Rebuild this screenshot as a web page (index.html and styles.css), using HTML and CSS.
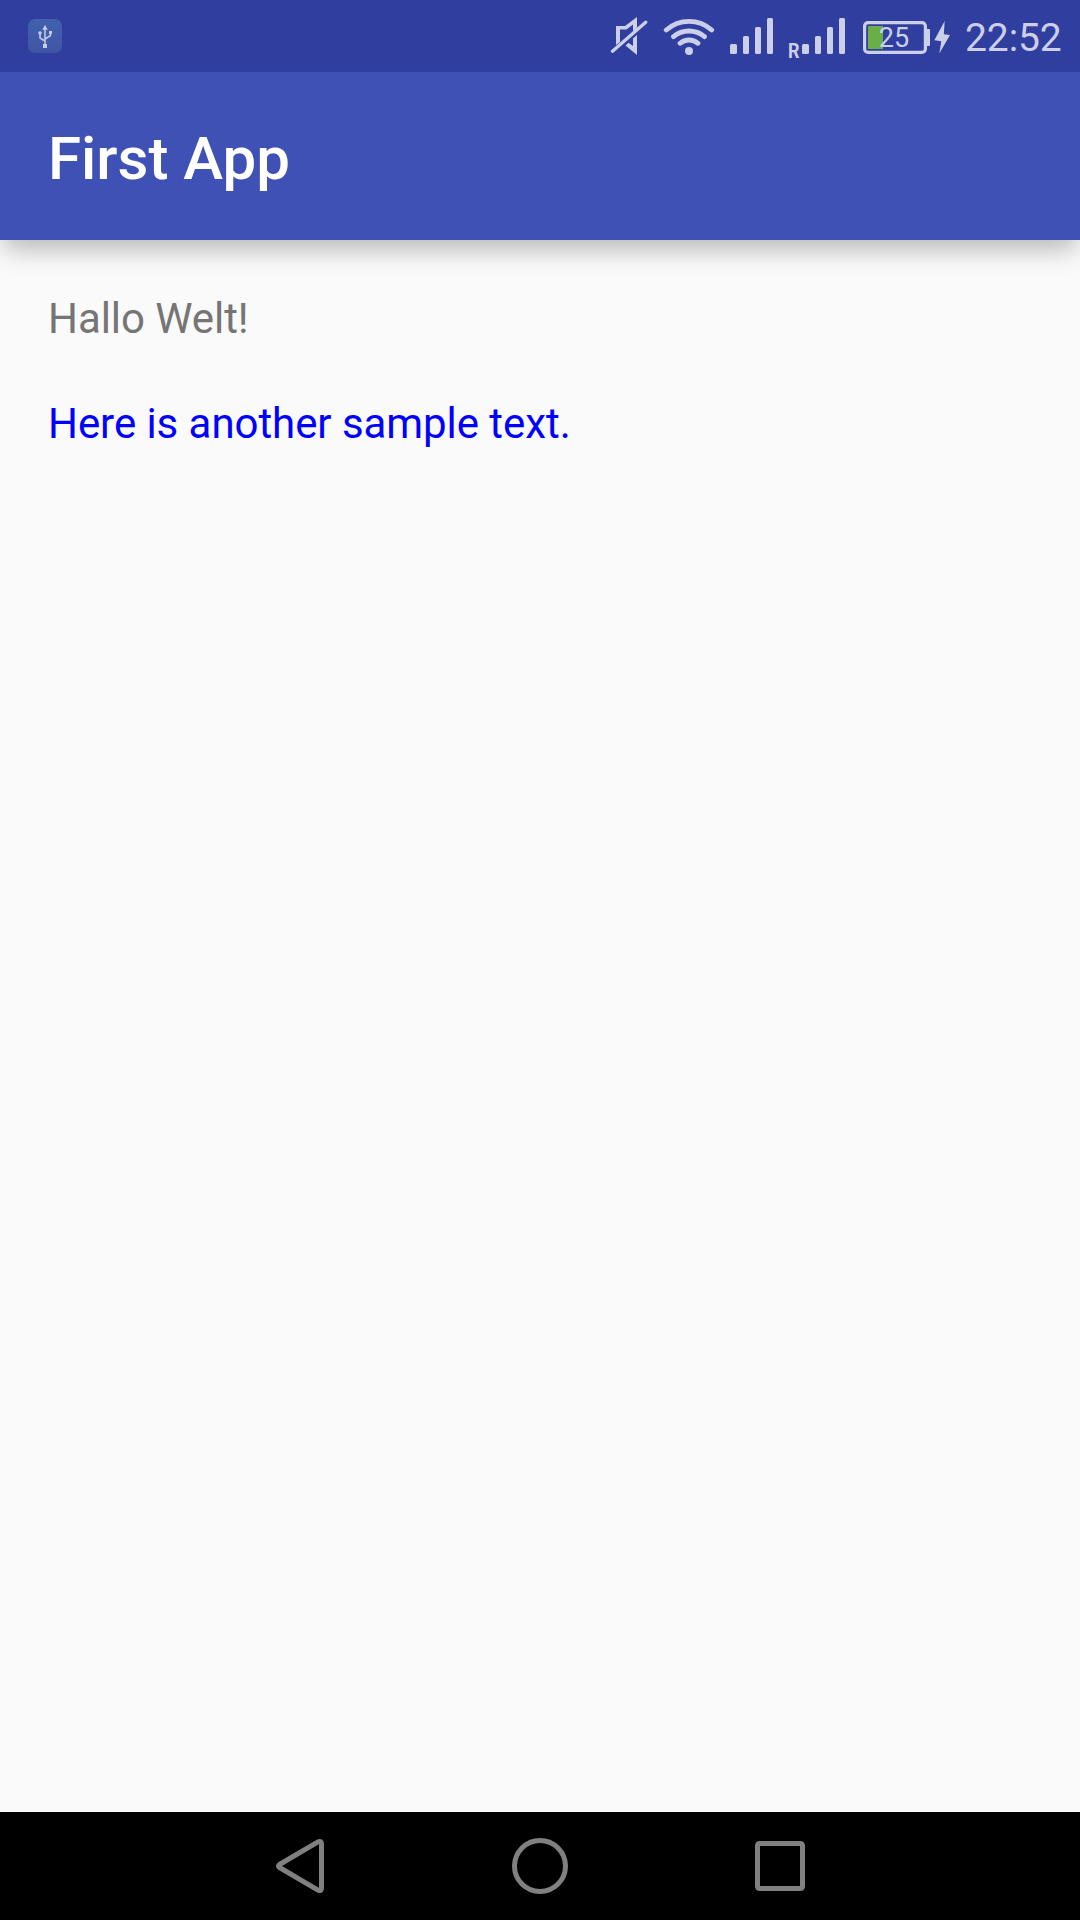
FILE: index.html
```html
<!DOCTYPE html>
<html lang="de">
<head>
<meta charset="utf-8">
<title>First App</title>
<link rel="stylesheet" href="styles.css">
</head>
<body>
<div class="screen">
  <header class="status-bar">
    <svg class="usb" width="34" height="34" viewBox="28 19 34 34">
      <defs><linearGradient id="tile" x2="0" y2="1"><stop offset="0" stop-color="#4061ae"/><stop offset="1" stop-color="#4055a5"/></linearGradient></defs>
      <rect x="28" y="19" width="34" height="34" rx="7" fill="url(#tile)"/>
      <path d="M45 46V29M45 41l-5-3v-5M45 39l5.500-3.500v-3" fill="none" stroke="#c4cbe6" stroke-width="1.500"/>
      <path d="M45 25l2.800 4.800h-5.600zM43 44h4v4h-4zM49 31h3v3h-3z" fill="#c4cbe6"/>
      <circle cx="40" cy="33" r="1.800" fill="#c4cbe6"/>
    </svg>
    <div class="indicators">
      <svg class="mute" width="38" height="72" viewBox="610 0 38 72">
        <path d="M616 45V26h9l12-9v11l-4 3.500V24.500l-6.500 5H620V42zM637 35v20l-11.500-9.500 3-2.800 4.500 3.300V38.500z" fill="#cccfe8"/>
        <path d="M612.500 51.200L645.700 22.200" stroke="#cccfe8" stroke-width="3.300" stroke-linecap="round"/>
      </svg>
      <svg class="wifi" width="52" height="72" viewBox="663 0 52 72">
        <g fill="none" stroke="#cccfe8" stroke-width="4.800" stroke-linecap="round">
          <path d="M666.300 30A34 34 0 0 1 711.700 30M673.500 36.700A24 24 0 0 1 704.500 36.700M680 43.300A14 14 0 0 1 698 43.300"/>
        </g>
        <circle cx="689" cy="51" r="4" fill="#cccfe8"/>
      </svg>
      <svg class="signal" width="43" height="72" viewBox="730 0 43 72" fill="#cccfe8">
        <rect x="730" y="44" width="7" height="10" rx="1.500"/>
        <rect x="743" y="36" width="6" height="18" rx="1.500"/>
        <rect x="755" y="27" width="6" height="27" rx="1.500"/>
        <rect x="767" y="18" width="6" height="36" rx="1.500"/>
      </svg>
      <svg class="signal-roaming" width="57" height="72" viewBox="788 0 57 72" fill="#cccfe8">
        <text class="roaming" x="788" y="58" textLength="11.500" lengthAdjust="spacingAndGlyphs">R</text>
        <rect x="802" y="44" width="7" height="10" rx="1.500"/>
        <rect x="815" y="36" width="6" height="18" rx="1.500"/>
        <rect x="827" y="27" width="6" height="27" rx="1.500"/>
        <rect x="839" y="18" width="6" height="36" rx="1.500"/>
      </svg>
      <svg class="battery" width="88" height="72" viewBox="862 0 88 72">
        <rect x="864.600" y="22.600" width="60.800" height="29.800" rx="3.500" fill="none" stroke="#cccfe8" stroke-width="3.200"/>
        <path d="M927 29h2q1 0 1 1v15q0 1-1 1h-2z" fill="#cccfe8"/>
        <rect x="868" y="26" width="15" height="23" fill="#6aaf45"/>
        <text class="level" x="878.800" y="46.700">25</text>
        <path d="M944.700 21L934.300 40.200l7 1-2 12.300L950 35l-6.200-.8z" fill="#cccfe8"/>
      </svg>
      <span class="clock">22:52</span>
    </div>
  </header>
  <div class="app-bar"><h1 class="title">First App</h1></div>
  <main class="content">
    <p class="line">Hallo Welt!</p>
    <p class="line accent">Here is another sample text.</p>
  </main>
  <nav class="nav-bar">
    <svg width="240" height="108" viewBox="180 1812 240 108" aria-label="Back">
      <path d="M279.500 1864.500Q277.500 1866 279.500 1867.500L318 1890.200Q321.500 1891.500 321.500 1888V1844Q321.500 1840.500 318 1841.800Z" fill="none" stroke="#808080" stroke-width="5" stroke-linejoin="round"/>
    </svg>
    <svg width="240" height="108" viewBox="420 1812 240 108" aria-label="Home">
      <circle cx="540" cy="1866" r="25.500" fill="none" stroke="#808080" stroke-width="5"/>
    </svg>
    <svg width="240" height="108" viewBox="660 1812 240 108" aria-label="Recent apps">
      <rect x="757.500" y="1843.500" width="45" height="45" rx="2" fill="none" stroke="#808080" stroke-width="5"/>
    </svg>
  </nav>
</div>
</body>
</html>
```
FILE: styles.css
```css
body {
  margin: 0;
  font-family: Roboto, "Liberation Sans", sans-serif;
}

.screen {
  display: flex;
  flex-direction: column;
  width: 1080px;
  height: 1920px;
  overflow: hidden;
  background: #fafafa;
}

.screen svg {
  display: block;
  flex: none;
}

.status-bar {
  z-index: 1;
  display: flex;
  flex: none;
  align-items: center;
  justify-content: space-between;
  box-sizing: border-box;
  height: 72px;
  padding: 0 17px 0 28px;
  background: #303f9f;
}

.indicators {
  display: flex;
  height: 72px;
}

.wifi,
.signal,
.signal-roaming {
  margin-left: 15px;
}

.battery {
  margin-left: 17px;
}

.roaming {
  font-size: 20px;
  font-weight: 700;
}

.level {
  font-size: 27px;
  fill: #cccfe8;
}

.clock {
  width: 98px;
  margin-left: 15px;
  font-size: 39px;
  line-height: 76px;
  letter-spacing: -0.1px;
  white-space: nowrap;
  color: #cccfe8;
}

.app-bar {
  display: flex;
  flex: none;
  align-items: center;
  box-sizing: border-box;
  height: 168px;
  padding: 6px 0 0 48px;
  background: #3f51b5;
  box-shadow: 0 13px 24px -4px rgba(0, 0, 0, 0.27);
}

.title {
  margin: 0;
  font-size: 60px;
  font-weight: 500;
  line-height: 70px;
  color: #fff;
}

.content {
  display: flex;
  flex: 1;
  flex-direction: column;
  gap: 48px;
  padding: 48px 48px 0;
}

.line {
  margin: 0;
  padding-top: 5px;
  font-size: 42px;
  line-height: 52px;
  letter-spacing: -0.06px;
  color: #757575;
}

.accent {
  color: #00f;
}

.nav-bar {
  display: flex;
  flex: none;
  justify-content: center;
  height: 108px;
  background: #000;
}
```
